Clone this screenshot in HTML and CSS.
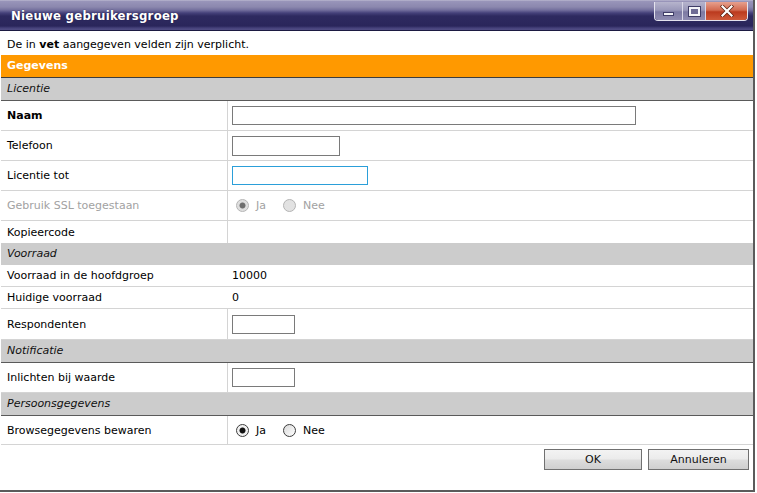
FILE: index.html
```html
<!DOCTYPE html>
<html lang="nl">
<head>
<meta charset="utf-8">
<title>Nieuwe gebruikersgroep</title>
<link rel="stylesheet" href="styles.css">
</head>
<body>
<div class="window">
  <div class="titlebar">
    <span class="title">Nieuwe gebruikersgroep</span>
    <div class="controls">
      <span class="ctl ctl-min"><span class="min-icon"></span></span>
      <span class="ctl ctl-max"><span class="max-icon"></span></span>
      <span class="ctl ctl-close">
        <svg width="14" height="12" viewBox="0 0 14 12"><path d="M2.5 1.5 L11.5 10.5 M11.5 1.5 L2.5 10.5" stroke="#5a2010" stroke-width="3.6" stroke-linecap="square" fill="none"/><path d="M2.5 1.5 L11.5 10.5 M11.5 1.5 L2.5 10.5" stroke="#ffffff" stroke-width="2.2" stroke-linecap="square" fill="none"/></svg>
      </span>
    </div>
  </div>
  <div class="content">
    <p class="intro">De in <b>vet</b> aangegeven velden zijn verplicht.</p>
    <div class="form">
      <div class="section">Gegevens</div>

      <div class="group">Licentie</div>
      <div class="row"><div class="label required">Naam</div><div class="value"><input class="field w-naam" type="text"></div></div>
      <div class="row"><div class="label">Telefoon</div><div class="value"><input class="field w-tel" type="text"></div></div>
      <div class="row"><div class="label">Licentie tot</div><div class="value"><input class="field w-date focus" type="text"></div></div>
      <div class="row"><div class="label disabled">Gebruik SSL toegestaan</div><div class="value">
        <label class="opt disabled"><input class="radio" type="radio" name="ssl" checked disabled>Ja</label>
        <label class="opt disabled"><input class="radio" type="radio" name="ssl" disabled>Nee</label>
      </div></div>
      <div class="row short noline"><div class="label">Kopieercode</div><div class="value"></div></div>

      <div class="group plain">Voorraad</div>
      <div class="row short nodiv"><div class="label">Voorraad in de hoofdgroep</div><div class="value">10000</div></div>
      <div class="row short nodiv"><div class="label">Huidige voorraad</div><div class="value">0</div></div>
      <div class="row tall"><div class="label">Respondenten</div><div class="value"><input class="field w-num" type="text"></div></div>

      <div class="group">Notificatie</div>
      <div class="row"><div class="label">Inlichten bij waarde</div><div class="value"><input class="field w-num" type="text"></div></div>

      <div class="group">Persoonsgegevens</div>
      <div class="row mid"><div class="label">Browsegegevens bewaren</div><div class="value">
        <label class="opt"><input class="radio" type="radio" name="browse" checked>Ja</label>
        <label class="opt"><input class="radio" type="radio" name="browse">Nee</label>
      </div></div>
    </div>
    <div class="footer">
      <button class="btn">OK</button>
      <button class="btn">Annuleren</button>
    </div>
  </div>
</div>
</body>
</html>
```
FILE: styles.css
```css
* { box-sizing: border-box; }
html, body { margin: 0; padding: 0; background: #ffffff; }
body {
  width: 757px;
  height: 493px;
  overflow: hidden;
  font-family: "DejaVu Sans", "Liberation Sans", sans-serif;
  font-size: 11px;
  color: #000;
}
.window {
  width: 755px;
  height: 492px;
  display: flex;
  flex-direction: column;
  border-right: 2px solid #5b5b5b;
  border-bottom: 2px solid #5b5b5b;
  background: #fff;
}
.titlebar {
  height: 31px;
  flex: none;
  display: flex;
  justify-content: space-between;
  align-items: flex-start;
  border-bottom: 1px solid #1c1a42;
  background: linear-gradient(to bottom,
    #c4c2d6 0px, #9995ba 1px, #8b87ae 7px, #736f9d 10px,
    #45417a 13px, #2e2a60 16px, #2a265b 26px, #45417a 28px, #524e86 30px);
}
.title {
  color: #fff;
  font-family: "DejaVu Sans Condensed", "DejaVu Sans", sans-serif;
  font-weight: bold;
  font-size: 13px;
  letter-spacing: 0.25px;
  line-height: 16px;
  padding: 8px 0 0 11px;
  text-shadow: 0 0 1px #1c1a42;
}
.controls {
  display: flex;
  margin: 2px 5px 0 0;
  border: 1px solid #e4e3ee;
  border-top: none;
  border-radius: 0 0 4px 4px;
  overflow: hidden;
  height: 19px;
}
.ctl {
  display: flex;
  align-items: center;
  justify-content: center;
  height: 100%;
  border-left: 1px solid #d8d6e6;
  background: linear-gradient(to bottom, #b6b4cd 0%, #9a98b9 45%, #7c79a2 55%, #8f8cb1 100%);
}
.ctl:first-child { border-left: none; }
.ctl-min { width: 27px; }
.ctl-max { width: 23px; }
.ctl-close {
  width: 42px;
  background: linear-gradient(to bottom, #e7a08e 0%, #d26a50 45%, #bb3a1e 55%, #cf5a3a 100%);
}
.min-icon {
  width: 11px;
  height: 4px;
  margin-top: 6px;
  background: #f4f4f8;
  border: 1px solid #3f3c66;
}
.max-icon {
  width: 11px;
  height: 9px;
  border: 2px solid #f4f4f8;
  outline: 1px solid #3f3c66;
  background: #6e6b95;
}
.content {
  flex: 1;
  display: flex;
  flex-direction: column;
}
.intro {
  margin: 0;
  padding: 7px 7px 3px;
  line-height: 14px;
  height: 24px;
}
.form {
  margin-left: 1px;
  width: 752px;
}
.section {
  height: 23px;
  line-height: 22px;
  background: #ff9900;
  color: #fff;
  font-weight: bold;
  padding-left: 6px;
  border-bottom: 1px solid #3d3d3d;
}
.group {
  height: 23px;
  line-height: 22px;
  background: #cccccc;
  font-style: italic;
  padding-left: 6px;
  border-bottom: 1px solid #5a5a5a;
  color: #111;
}
.group.plain { border-bottom: none; height: 22px; }
.row {
  display: grid;
  grid-template-columns: 227px 1fr;
  height: 30px;
  border-bottom: 1px solid #d4d4d4;
}
.row.short { height: 22px; }
.row.tall { height: 31px; }
.row.mid { height: 29px; }
.row.noline { border-bottom: none; }
.label {
  display: flex;
  align-items: center;
  padding-left: 6px;
  border-right: 1px solid #d4d4d4;
}
.row.nodiv .label { border-right-color: transparent; }
.label.required { font-weight: bold; }
.label.disabled { color: #a2a2a2; }
.value {
  display: flex;
  align-items: center;
  padding-left: 4px;
}
.field {
  margin: 0;
  padding: 0 2px;
  height: 19px;
  border: 1px solid #7a7a7a;
  font: inherit;
  background: #fff;
}
.w-naam { width: 404px; }
.w-tel { width: 108px; height: 20px; }
.w-date { width: 136px; }
.w-num { width: 63px; }
.field.focus { border-color: #2b9fd9; }
.opt {
  display: inline-flex;
  align-items: center;
  margin-right: 17px;
}
.opt.disabled { color: #a2a2a2; }
.radio {
  appearance: none;
  -webkit-appearance: none;
  width: 13px;
  height: 13px;
  margin: 0 7px 0 4px;
  border-radius: 50%;
  border: 1px solid #3c3c3c;
  background: linear-gradient(to bottom right, #d9d9d9, #ffffff);
}
.opt + .opt .radio { margin-left: 0; }
.radio:checked {
  background: radial-gradient(circle, #111 0, #111 2.6px, #eeeeee 3.4px, #fafafa 100%);
}
.radio:disabled {
  border-color: #b4b4b4;
  background: #e2e2e2;
}
.radio:disabled:checked {
  background: radial-gradient(circle, #6e6e6e 0, #6e6e6e 2.6px, #dcdcdc 3.4px, #e6e6e6 100%);
}
.footer {
  display: flex;
  justify-content: flex-end;
  gap: 6px;
  padding: 4px 4px 0 0;
}
.btn {
  width: 98px;
  height: 21px;
  margin: 0;
  padding: 0;
  font: inherit;
  font-size: 11px;
  color: #111;
  border: 1px solid #707070;
  border-radius: 0;
  background: linear-gradient(to bottom, #f3f3f3 0%, #ebebeb 48%, #dddddd 52%, #cfcfcf 100%);
}
.btn + .btn { width: 101px; }
```
